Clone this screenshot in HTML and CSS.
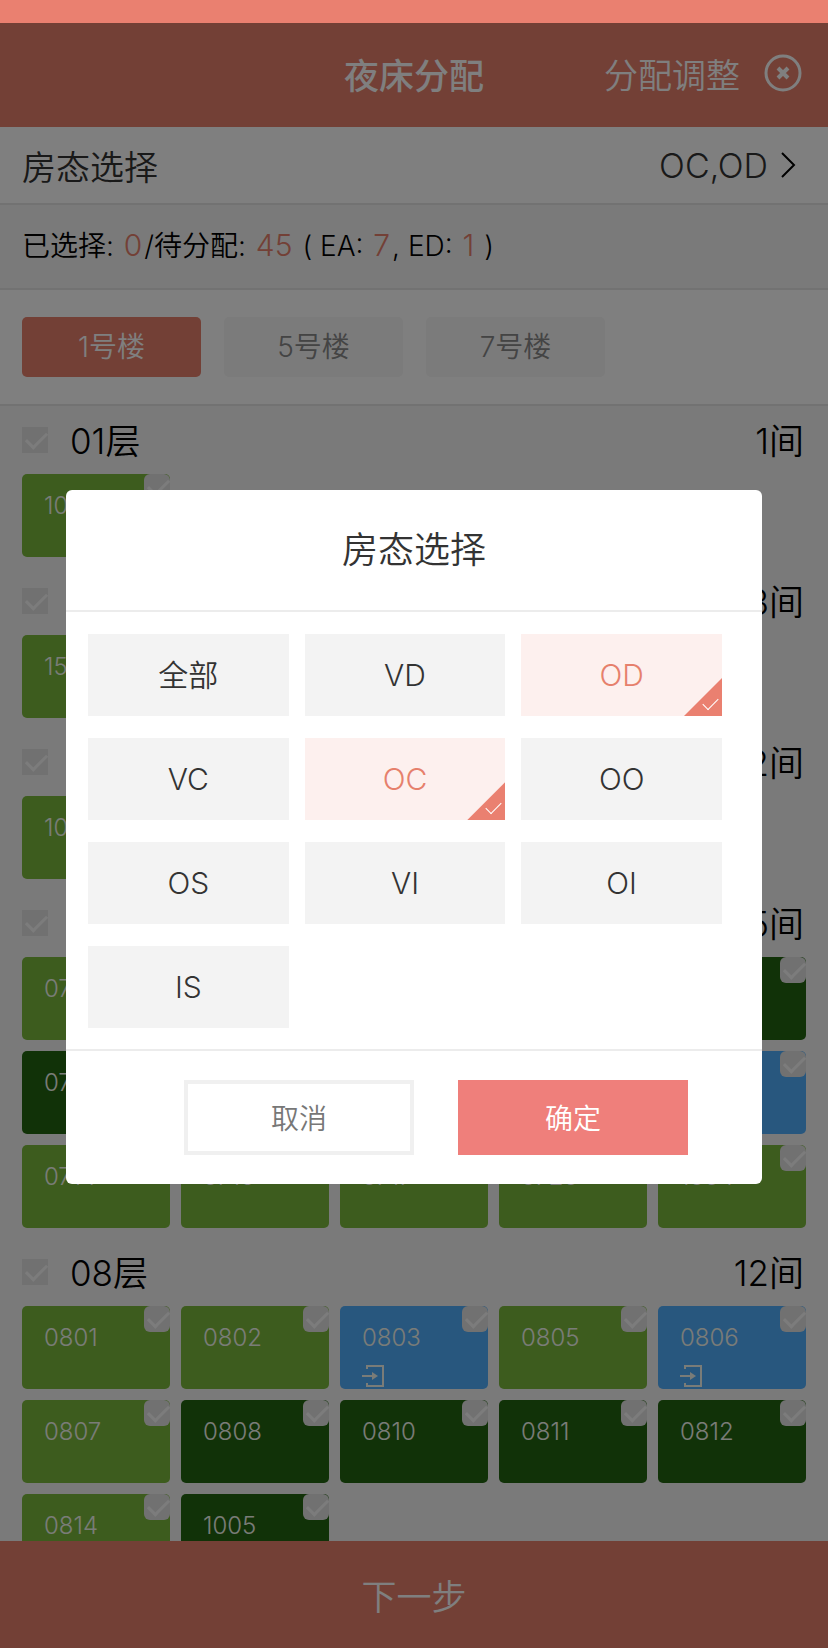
FILE: index.html
```html
<!DOCTYPE html>
<html lang="zh-CN">
<head>
    <meta charset="UTF-8">
    <meta name="viewport" content="width=device-width, initial-scale=1.0">
    <title>夜床分配</title>
    <link rel="stylesheet" href="styles.css">
</head>

<body>
    <svg class="sprite" aria-hidden="true">
        <symbol id="icon-enter" viewBox="0 0 22 22">
            <path d="M5 4V1h16v20H5v-3" fill="none" stroke="currentColor" stroke-width="2"/>
            <path d="M0 11h12" fill="none" stroke="currentColor" stroke-width="2"/>
            <path d="M10 7l6 4-6 4z" fill="currentColor"/>
        </symbol>
    </svg>

    <div class="app">
        <div class="status-bar"></div>

        <header class="header">
            <h1>夜床分配</h1>
            <div class="header-right">
                <button type="button" class="adjust">分配调整</button>
                <button type="button" class="close" aria-label="关闭">
                    <svg viewBox="0 0 38 38" fill="none" stroke="currentColor">
                        <circle cx="19" cy="19" r="17" stroke-width="3"/>
                        <path d="M14 14l10 10M24 14l-10 10" stroke-width="4"/>
                    </svg>
                </button>
            </div>
        </header>

        <button type="button" class="state-row">
            <span>房态选择</span>
            <span class="state-value">OC,OD
                <svg viewBox="0 0 16 28" fill="none" stroke="#000" stroke-width="2"><path d="M2 2l12 12L2 26"/></svg>
            </span>
        </button>

        <p class="summary">已选择: <b>0</b>/待分配: <b>45</b> ( EA: <b>7</b>, ED: <b>1</b> )</p>

        <nav class="tabs">
            <button type="button" class="tab active">1号楼</button>
            <button type="button" class="tab">5号楼</button>
            <button type="button" class="tab">7号楼</button>
        </nav>

        <main class="floors">
            <section class="floor">
                <div class="floor-head">
                    <label><input type="checkbox" class="check">01层</label>
                    <span>1间</span>
                </div>
                <div class="rooms">
                    <label class="room">1001<input type="checkbox" class="check"></label>
                </div>
            </section>

            <section class="floor">
                <div class="floor-head">
                    <label><input type="checkbox" class="check">02层</label>
                    <span>3间</span>
                </div>
                <div class="rooms">
                    <label class="room">1501<input type="checkbox" class="check"></label>
                    <label class="room">1502<input type="checkbox" class="check"></label>
                    <label class="room">1503<input type="checkbox" class="check"></label>
                </div>
            </section>

            <section class="floor">
                <div class="floor-head">
                    <label><input type="checkbox" class="check">03层</label>
                    <span>2间</span>
                </div>
                <div class="rooms">
                    <label class="room">1002<input type="checkbox" class="check"></label>
                    <label class="room">1003<input type="checkbox" class="check"></label>
                </div>
            </section>

            <section class="floor">
                <div class="floor-head">
                    <label><input type="checkbox" class="check">07层</label>
                    <span>15间</span>
                </div>
                <div class="rooms">
                    <label class="room">0701<input type="checkbox" class="check"></label>
                    <label class="room">0702<input type="checkbox" class="check"></label>
                    <label class="room">0703<input type="checkbox" class="check"></label>
                    <label class="room">0704<input type="checkbox" class="check"></label>
                    <label class="room dark">0705<input type="checkbox" class="check"></label>
                    <label class="room dark">0706<input type="checkbox" class="check"></label>
                    <label class="room">0707<input type="checkbox" class="check"></label>
                    <label class="room">0708<input type="checkbox" class="check"></label>
                    <label class="room">0709<input type="checkbox" class="check"></label>
                    <label class="room blue">0710<input type="checkbox" class="check"></label>
                    <label class="room">0714<input type="checkbox" class="check"></label>
                    <label class="room">0716<input type="checkbox" class="check"></label>
                    <label class="room">0717<input type="checkbox" class="check"></label>
                    <label class="room">0720<input type="checkbox" class="check"></label>
                    <label class="room">1004<input type="checkbox" class="check"></label>
                </div>
            </section>

            <section class="floor">
                <div class="floor-head">
                    <label><input type="checkbox" class="check">08层</label>
                    <span>12间</span>
                </div>
                <div class="rooms">
                    <label class="room">0801<input type="checkbox" class="check"></label>
                    <label class="room">0802<input type="checkbox" class="check"></label>
                    <label class="room blue">0803<input type="checkbox" class="check"><svg><use href="#icon-enter"/></svg></label>
                    <label class="room">0805<input type="checkbox" class="check"></label>
                    <label class="room blue">0806<input type="checkbox" class="check"><svg><use href="#icon-enter"/></svg></label>
                    <label class="room">0807<input type="checkbox" class="check"></label>
                    <label class="room dark">0808<input type="checkbox" class="check"></label>
                    <label class="room dark">0810<input type="checkbox" class="check"></label>
                    <label class="room dark">0811<input type="checkbox" class="check"></label>
                    <label class="room dark">0812<input type="checkbox" class="check"></label>
                    <label class="room">0814<input type="checkbox" class="check"></label>
                    <label class="room dark">1005<input type="checkbox" class="check"></label>
                </div>
            </section>
        </main>

        <button type="button" class="next">下一步</button>
    </div>

    <div class="mask">
        <form class="modal" role="dialog" aria-labelledby="modal-title">
            <h2 id="modal-title">房态选择</h2>
            <div class="options">
                <label class="option"><input type="checkbox">全部</label>
                <label class="option"><input type="checkbox">VD</label>
                <label class="option"><input type="checkbox" checked>OD</label>
                <label class="option"><input type="checkbox">VC</label>
                <label class="option"><input type="checkbox" checked>OC</label>
                <label class="option"><input type="checkbox">OO</label>
                <label class="option"><input type="checkbox">OS</label>
                <label class="option"><input type="checkbox">VI</label>
                <label class="option"><input type="checkbox">OI</label>
                <label class="option"><input type="checkbox">IS</label>
            </div>
            <div class="modal-foot">
                <button type="button" class="cancel">取消</button>
                <button type="button" class="confirm">确定</button>
            </div>
        </form>
    </div>
</body>
</html>
```
FILE: styles.css
```css
* {
    margin: 0;
    padding: 0;
    box-sizing: border-box;
}

body {
    font-family: Inter, "Noto Sans CJK SC", sans-serif;
    font-weight: 350;
    color: #000;
    background: #f5f5f5;
}

button {
    font: inherit;
    color: inherit;
    border: none;
    background: none;
    cursor: pointer;
}

.sprite {
    display: none;
}

.app {
    height: 100vh;
    display: flex;
    flex-direction: column;
    overflow: hidden;
}

/* top */
.status-bar {
    flex: none;
    height: 23px;
    background: #ea8070;
}

.header {
    flex: none;
    height: 104px;
    display: grid;
    grid-template-columns: 1fr auto 1fr;
    align-items: center;
    padding: 0 26px 4px;
    background: #e6806c;
    color: #fff;
}

.header h1 {
    grid-column: 2;
    font-size: 35px;
    font-weight: 500;
}

.header-right {
    display: flex;
    justify-content: flex-end;
    align-items: center;
    gap: 24px;
    font-size: 34px;
}

.close svg {
    display: block;
    width: 38px;
    height: 38px;
}

.state-row {
    flex: none;
    height: 78px;
    display: flex;
    justify-content: space-between;
    align-items: center;
    padding: 0 32px 0 22px;
    background: #fff;
    border-bottom: 2px solid #e4e4e4;
    font-size: 34px;
    color: #333;
}

.state-value {
    display: flex;
    align-items: center;
    gap: 12px;
}

.state-value svg {
    width: 16px;
    height: 28px;
}

.summary {
    flex: none;
    height: 85px;
    padding-left: 22px;
    line-height: 80px;
    border-bottom: 2px solid #e4e4e4;
    font-size: 28px;
}

.summary b {
    margin: 0 2px;
    font-weight: 350;
    font-size: 30px;
    color: #e6806c;
}

.tabs {
    flex: none;
    display: flex;
    gap: 23px;
    padding: 27px 22px;
    background: #fff;
    border-bottom: 2px solid #e4e4e4;
}

.tab {
    width: 179px;
    height: 60px;
    padding-bottom: 4px;
    border-radius: 5px;
    background: #f6f6f6;
    color: #888;
    font-size: 28px;
}

.tab.active {
    background: #e6806c;
    color: #fff;
}

/* floors */
.floors {
    flex: 1;
    overflow: hidden;
    padding: 0 22px;
}

.floor {
    margin-bottom: 10px;
}

.floor-head {
    height: 68px;
    display: flex;
    justify-content: space-between;
    align-items: center;
    padding: 0 2px 4px 0;
    font-size: 35px;
}

.floor-head label {
    display: flex;
    align-items: center;
    gap: 22px;
}

.floor-head .check {
    margin-top: 4px;
}

.check {
    appearance: none;
    flex: none;
    width: 26px;
    height: 26px;
    background: #e2e2e2;
}

/* tick */
.check::before {
    content: "";
    display: block;
    width: 18px;
    height: 9px;
    margin: 5px 0 0 4px;
    border-left: 3px solid #f8f8f8;
    border-bottom: 3px solid #f8f8f8;
    transform: rotate(-45deg);
}

.rooms {
    display: grid;
    grid-template-columns: repeat(5, 1fr);
    gap: 11px;
}

.room {
    position: relative;
    height: 83px;
    padding: 16px 22px 0;
    border-radius: 5px;
    background: #7ab83c;
    color: #f4f8f0;
    font-size: 24px;
    line-height: 32px;
}

.room.dark {
    background: #226410;
}

.room.blue {
    background: #50aefc;
}

.room .check {
    position: absolute;
    top: 0;
    right: 0;
    border-radius: 6px;
}

.room svg {
    display: block;
    width: 22px;
    height: 22px;
    margin-top: 11px;
}

.next {
    flex: none;
    height: 107px;
    background: #e6806c;
    color: #fff;
    font-size: 35px;
}

/* dialog */
.mask {
    position: fixed;
    inset: 23px 0 0;
    display: flex;
    align-items: center;
    justify-content: center;
    padding: 3px 66px 0;
    background: rgba(0, 0, 0, 0.5);
}

.modal {
    width: 100%;
    background: #fff;
    border-radius: 6px;
    color: #333;
}

.modal h2 {
    line-height: 120px;
    border-bottom: 2px solid #ececec;
    font-size: 36px;
    font-weight: 350;
    text-align: center;
}

.options {
    display: grid;
    grid-template-columns: repeat(3, 1fr);
    gap: 22px 16px;
    padding: 22px 40px 21px 22px;
}

.option {
    position: relative;
    height: 82px;
    line-height: 82px;
    background: #f3f3f3;
    font-size: 30px;
    text-align: center;
}

.option input {
    appearance: none;
    position: absolute;
    right: 0;
    bottom: 0;
}

.option:has(input:checked) {
    background: #fdf0ee;
    color: #e6806c;
}

.option input:checked {
    width: 38px;
    height: 38px;
    background: #ea8070;
    clip-path: polygon(100% 0, 100% 100%, 0 100%);
}

.option input:checked::before {
    content: "";
    position: absolute;
    right: 4px;
    bottom: 10px;
    width: 14px;
    height: 7px;
    border-left: 1px solid #fff;
    border-bottom: 1px solid #fff;
    transform: rotate(-45deg);
}

.modal-foot {
    display: flex;
    justify-content: center;
    padding: 29px 0;
    border-top: 2px solid #ececec;
}

.modal-foot button {
    width: 230px;
    height: 75px;
    margin-left: 44px;
    padding-bottom: 2px;
    font-size: 28px;
}

.cancel {
    border: 4px solid #f0f0f0;
    color: #777;
}

.confirm {
    background: #ef7f7b;
    color: #fff;
}
```
